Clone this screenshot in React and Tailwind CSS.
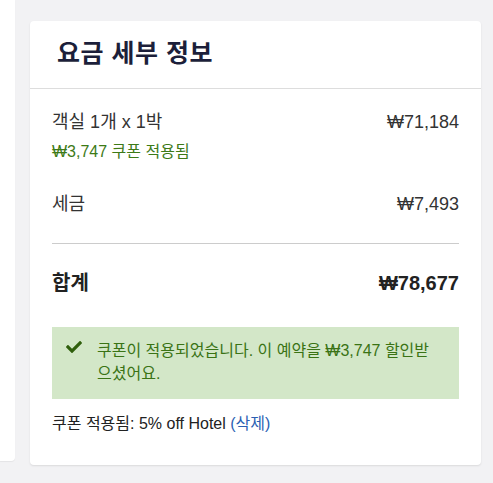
import { FaCheck } from 'react-icons/fa'

const font = { fontFamily: '"Liberation Sans", "Noto Sans CJK KR", sans-serif' }

export default function App() {
  return (
    <div className="min-h-[483px] bg-[#f2f2f4] flex gap-[15px]" style={font}>
      <div className="w-[15px] h-[461px] bg-white rounded-br-[4px] shadow-[0_1px_1px_rgba(0,0,0,0.06)]" />

      <div className="w-[451px] mt-[21px] mb-[18px] bg-white rounded-[4px] shadow-[0_1px_2px_rgba(0,0,0,0.1)]">
        <div className="h-[68px] flex items-center px-[27px] pb-[3px] border-b border-[#dddddd]">
          <h2 className="text-[25px] leading-[34px] font-bold text-[#1c1f3a] tracking-[0.5px]">요금 세부 정보</h2>
        </div>

        <div className="px-[22px] pt-[20px] pb-[28px]">
          <div className="flex justify-between text-[18px] leading-[26px] text-[#333333]">
            <span>객실 1개 x 1박</span>
            <span>₩71,184</span>
          </div>
          <div className="mt-[6px] text-[16px] leading-[22px] text-[#3d7a17]">₩3,747 쿠폰 적용됨</div>

          <div className="mt-[28px] flex justify-between text-[18px] leading-[26px] text-[#333333]">
            <span>세금</span>
            <span>₩7,493</span>
          </div>

          <div className="mt-[26px] border-t border-[#cccccc]" />

          <div className="mt-[25px] flex justify-between text-[20px] leading-[28px] font-bold text-[#222222]">
            <span>합계</span>
            <span>₩78,677</span>
          </div>

          <div className="mt-[30px] bg-[#d3e7c8] pl-[14px] pr-[16px] pt-[12px] pb-[14px] flex gap-[15px] text-[#3a7315]">
            <FaCheck className="w-[16px] h-[16px] shrink-0 text-[#2f5f0c]" />
            <p className="text-[16px] leading-[23px]">쿠폰이 적용되었습니다. 이 예약을 ₩3,747 할인받으셨어요.</p>
          </div>

          <div className="mt-[14px] text-[16px] leading-[22px] text-[#222222]">
            쿠폰 적용됨: 5% off Hotel <a className="text-[#2b5fb3]">(삭제)</a>
          </div>
        </div>
      </div>
    </div>
  )
}
